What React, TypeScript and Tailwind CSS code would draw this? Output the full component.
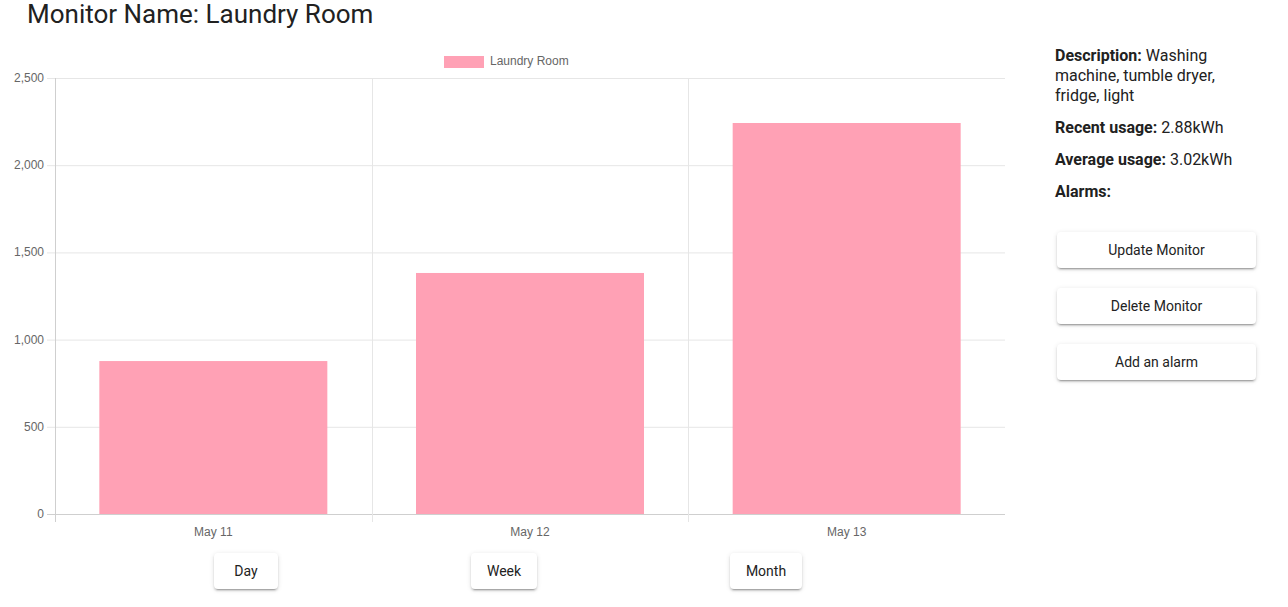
import React from 'react';

const bars = [
  { label: 'May 11', value: 877 },
  { label: 'May 12', value: 1382 },
  { label: 'May 13', value: 2242 },
];

const yTicks = [0, 500, 1000, 1500, 2000, 2500];

const Chart: React.FC = () => {
  const left = 55;
  const right = 1005;
  const top = 78;
  const bottom = 514;
  const max = 2500;
  const cat = (right - left) / bars.length;
  const barW = cat * 0.72;
  const y = (v: number) => bottom - (v / max) * (bottom - top);

  return (
    <svg width={1016} height={520} viewBox="0 30 1016 520" className="block" style={{ fontFamily: '"Liberation Sans", Arial, sans-serif' }}>
      {/* legend */}
      <rect x={444} y={56} width={40} height={12} fill="#ffa1b5" />
      <text x={490} y={65} fontSize={12} fill="#666">Laundry Room</text>

      {/* horizontal grid */}
      {yTicks.map((t) => (
        <g key={t}>
          <line x1={47} x2={right} y1={y(t) + 0.5} y2={y(t) + 0.5} stroke={t === 0 ? '#cfcfcf' : '#e6e6e6'} />
          <text x={44} y={y(t) + 4} fontSize={12} fill="#666" textAnchor="end">
            {t.toLocaleString('en-US')}
          </text>
        </g>
      ))}

      {/* vertical grid */}
      {[0, 1, 2].map((i) => (
        <line
          key={i}
          x1={Math.round(left + cat * i) + 0.5}
          x2={Math.round(left + cat * i) + 0.5}
          y1={top}
          y2={522}
          stroke={i === 0 ? '#cfcfcf' : '#e6e6e6'}
        />
      ))}

      {/* bars */}
      {bars.map((b, i) => {
        const x = left + cat * i + (cat - barW) / 2;
        return (
          <g key={b.label}>
            <rect x={x} y={y(b.value)} width={barW} height={bottom - y(b.value)} fill="#ffa1b5" />
            <text x={left + cat * i + cat / 2} y={536} fontSize={12} fill="#666" textAnchor="middle">
              {b.label}
            </text>
          </g>
        );
      })}
    </svg>
  );
};

const btn =
  'h-9 rounded bg-white text-sm font-normal text-[#222] shadow-[0_3px_1px_-2px_rgba(0,0,0,0.2),0_2px_2px_0_rgba(0,0,0,0.14),0_1px_5px_0_rgba(0,0,0,0.12)]';

export default function App() {
  return (
    <div className="flex min-h-[607px] bg-white text-[#212121]" style={{ fontFamily: 'Roboto, "Noto Sans", sans-serif' }}>
      <div className="w-[1016px] shrink-0">
        <h1 className="h-[30px] pl-[27px] text-[26px] leading-[29px] font-normal">Monitor Name: Laundry Room</h1>
        <Chart />
        <div className="mt-[3px] flex justify-center gap-[193px]">
          <button className={`${btn} w-16`}>Day</button>
          <button className={`${btn} w-[66px]`}>Week</button>
          <button className={`${btn} w-[72px]`}>Month</button>
        </div>
      </div>

      <div className="ml-[39px] w-[205px] pt-[46px]">
        <p className="mb-3 text-base leading-5">
          <span className="font-bold">Description:</span> Washing machine, tumble dryer, fridge, light
        </p>
        <p className="mb-3 text-base leading-5">
          <span className="font-bold">Recent usage:</span> 2.88kWh
        </p>
        <p className="mb-3 text-base leading-5">
          <span className="font-bold">Average usage:</span> 3.02kWh
        </p>
        <p className="mb-3 text-base leading-5">
          <span className="font-bold">Alarms:</span>
        </p>
        <div className="ml-[2px] mt-[30px] flex w-[199px] flex-col gap-5">
          <button className={btn}>Update Monitor</button>
          <button className={btn}>Delete Monitor</button>
          <button className={btn}>Add an alarm</button>
        </div>
      </div>
    </div>
  );
}
